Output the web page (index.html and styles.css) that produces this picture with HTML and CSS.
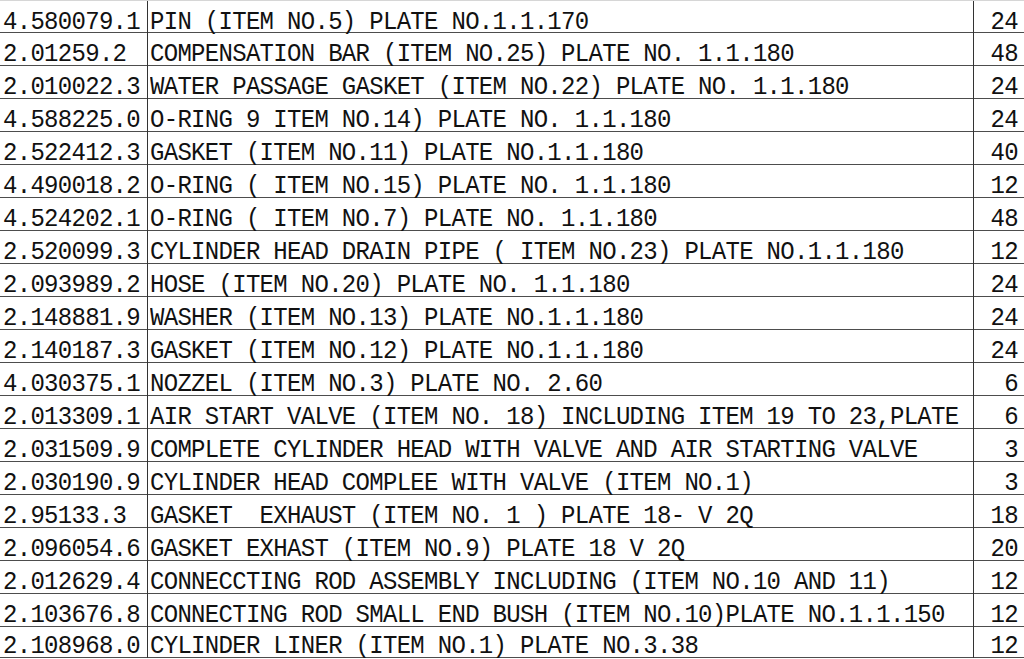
FILE: index.html
```html
<!DOCTYPE html>
<html>
<head>
<meta charset="utf-8">
<title>Parts list</title>
<link rel="stylesheet" href="styles.css">
</head>
<body>
<div class="sheet">
  <div class="row"><div class="cell code"><span class="t">4.580079.1</span></div><div class="cell desc"><span class="t">PIN (ITEM NO.5) PLATE NO.1.1.170</span></div><div class="cell qty"><span class="t">24</span></div></div>
  <div class="row"><div class="cell code"><span class="t">2.01259.2</span></div><div class="cell desc"><span class="t">COMPENSATION BAR (ITEM NO.25) PLATE NO. 1.1.180</span></div><div class="cell qty"><span class="t">48</span></div></div>
  <div class="row"><div class="cell code"><span class="t">2.010022.3</span></div><div class="cell desc"><span class="t">WATER PASSAGE GASKET (ITEM NO.22) PLATE NO. 1.1.180</span></div><div class="cell qty"><span class="t">24</span></div></div>
  <div class="row"><div class="cell code"><span class="t">4.588225.0</span></div><div class="cell desc"><span class="t">O-RING 9 ITEM NO.14) PLATE NO. 1.1.180</span></div><div class="cell qty"><span class="t">24</span></div></div>
  <div class="row"><div class="cell code"><span class="t">2.522412.3</span></div><div class="cell desc"><span class="t">GASKET (ITEM NO.11) PLATE NO.1.1.180</span></div><div class="cell qty"><span class="t">40</span></div></div>
  <div class="row"><div class="cell code"><span class="t">4.490018.2</span></div><div class="cell desc"><span class="t">O-RING ( ITEM NO.15) PLATE NO. 1.1.180</span></div><div class="cell qty"><span class="t">12</span></div></div>
  <div class="row"><div class="cell code"><span class="t">4.524202.1</span></div><div class="cell desc"><span class="t">O-RING ( ITEM NO.7) PLATE NO. 1.1.180</span></div><div class="cell qty"><span class="t">48</span></div></div>
  <div class="row"><div class="cell code"><span class="t">2.520099.3</span></div><div class="cell desc"><span class="t">CYLINDER HEAD DRAIN PIPE ( ITEM NO.23) PLATE NO.1.1.180</span></div><div class="cell qty"><span class="t">12</span></div></div>
  <div class="row"><div class="cell code"><span class="t">2.093989.2</span></div><div class="cell desc"><span class="t">HOSE (ITEM NO.20) PLATE NO. 1.1.180</span></div><div class="cell qty"><span class="t">24</span></div></div>
  <div class="row"><div class="cell code"><span class="t">2.148881.9</span></div><div class="cell desc"><span class="t">WASHER (ITEM NO.13) PLATE NO.1.1.180</span></div><div class="cell qty"><span class="t">24</span></div></div>
  <div class="row"><div class="cell code"><span class="t">2.140187.3</span></div><div class="cell desc"><span class="t">GASKET (ITEM NO.12) PLATE NO.1.1.180</span></div><div class="cell qty"><span class="t">24</span></div></div>
  <div class="row"><div class="cell code"><span class="t">4.030375.1</span></div><div class="cell desc"><span class="t">NOZZEL (ITEM NO.3) PLATE NO. 2.60</span></div><div class="cell qty"><span class="t">6</span></div></div>
  <div class="row"><div class="cell code"><span class="t">2.013309.1</span></div><div class="cell desc"><span class="t">AIR START VALVE (ITEM NO. 18) INCLUDING ITEM 19 TO 23,PLATE</span></div><div class="cell qty"><span class="t">6</span></div></div>
  <div class="row"><div class="cell code"><span class="t">2.031509.9</span></div><div class="cell desc"><span class="t">COMPLETE CYLINDER HEAD WITH VALVE AND AIR STARTING VALVE</span></div><div class="cell qty"><span class="t">3</span></div></div>
  <div class="row"><div class="cell code"><span class="t">2.030190.9</span></div><div class="cell desc"><span class="t">CYLINDER HEAD COMPLEE WITH VALVE (ITEM NO.1)</span></div><div class="cell qty"><span class="t">3</span></div></div>
  <div class="row"><div class="cell code"><span class="t">2.95133.3</span></div><div class="cell desc"><span class="t">GASKET  EXHAUST (ITEM NO. 1 ) PLATE 18- V 2Q</span></div><div class="cell qty"><span class="t">18</span></div></div>
  <div class="row"><div class="cell code"><span class="t">2.096054.6</span></div><div class="cell desc"><span class="t">GASKET EXHAST (ITEM NO.9) PLATE 18 V 2Q</span></div><div class="cell qty"><span class="t">20</span></div></div>
  <div class="row"><div class="cell code"><span class="t">2.012629.4</span></div><div class="cell desc"><span class="t">CONNECCTING ROD ASSEMBLY INCLUDING (ITEM NO.10 AND 11)</span></div><div class="cell qty"><span class="t">12</span></div></div>
  <div class="row"><div class="cell code"><span class="t">2.103676.8</span></div><div class="cell desc"><span class="t">CONNECTING ROD SMALL END BUSH (ITEM NO.10)PLATE NO.1.1.150</span></div><div class="cell qty"><span class="t">12</span></div></div>
  <div class="row"><div class="cell code"><span class="t">2.108968.0</span></div><div class="cell desc"><span class="t">CYLINDER LINER (ITEM NO.1) PLATE NO.3.38</span></div><div class="cell qty"><span class="t">12</span></div></div>
</div>
</body>
</html>
```
FILE: styles.css
```css
html, body {
  margin: 0;
  padding: 0;
  background: #ffffff;
}

body {
  width: 1024px;
  height: 659px;
  overflow: hidden;
  font-family: "Liberation Mono", "Noto Sans CJK SC", monospace;
  font-size: 24px;
  color: #111111;
}

.sheet {
  border-top: 1px solid #d6d6d6;
  display: flex;
  flex-direction: column;
}

.row {
  display: grid;
  grid-template-columns: 148px 826px 50px;
  height: 33px;
  box-sizing: border-box;
  border-bottom: 1px solid #4d4d4d;
}

.row:first-child {
  height: 32px;
}

.row:last-child {
  height: 31px;
}

.cell {
  box-sizing: border-box;
  white-space: pre;
  padding-top: 6px;
}

.row:last-child .cell {
  padding-top: 4px;
}

.code {
  border-right: 1px solid #333333;
  padding-left: 3px;
}

.desc {
  border-right: 1px solid #333333;
  padding-left: 2px;
}

.qty {
  text-align: right;
  padding-right: 6px;
}

.t {
  display: inline-block;
  line-height: 24px;
  letter-spacing: -0.7px;
  transform-origin: 0 0;
  transform: scaleY(1.1);
}
```
